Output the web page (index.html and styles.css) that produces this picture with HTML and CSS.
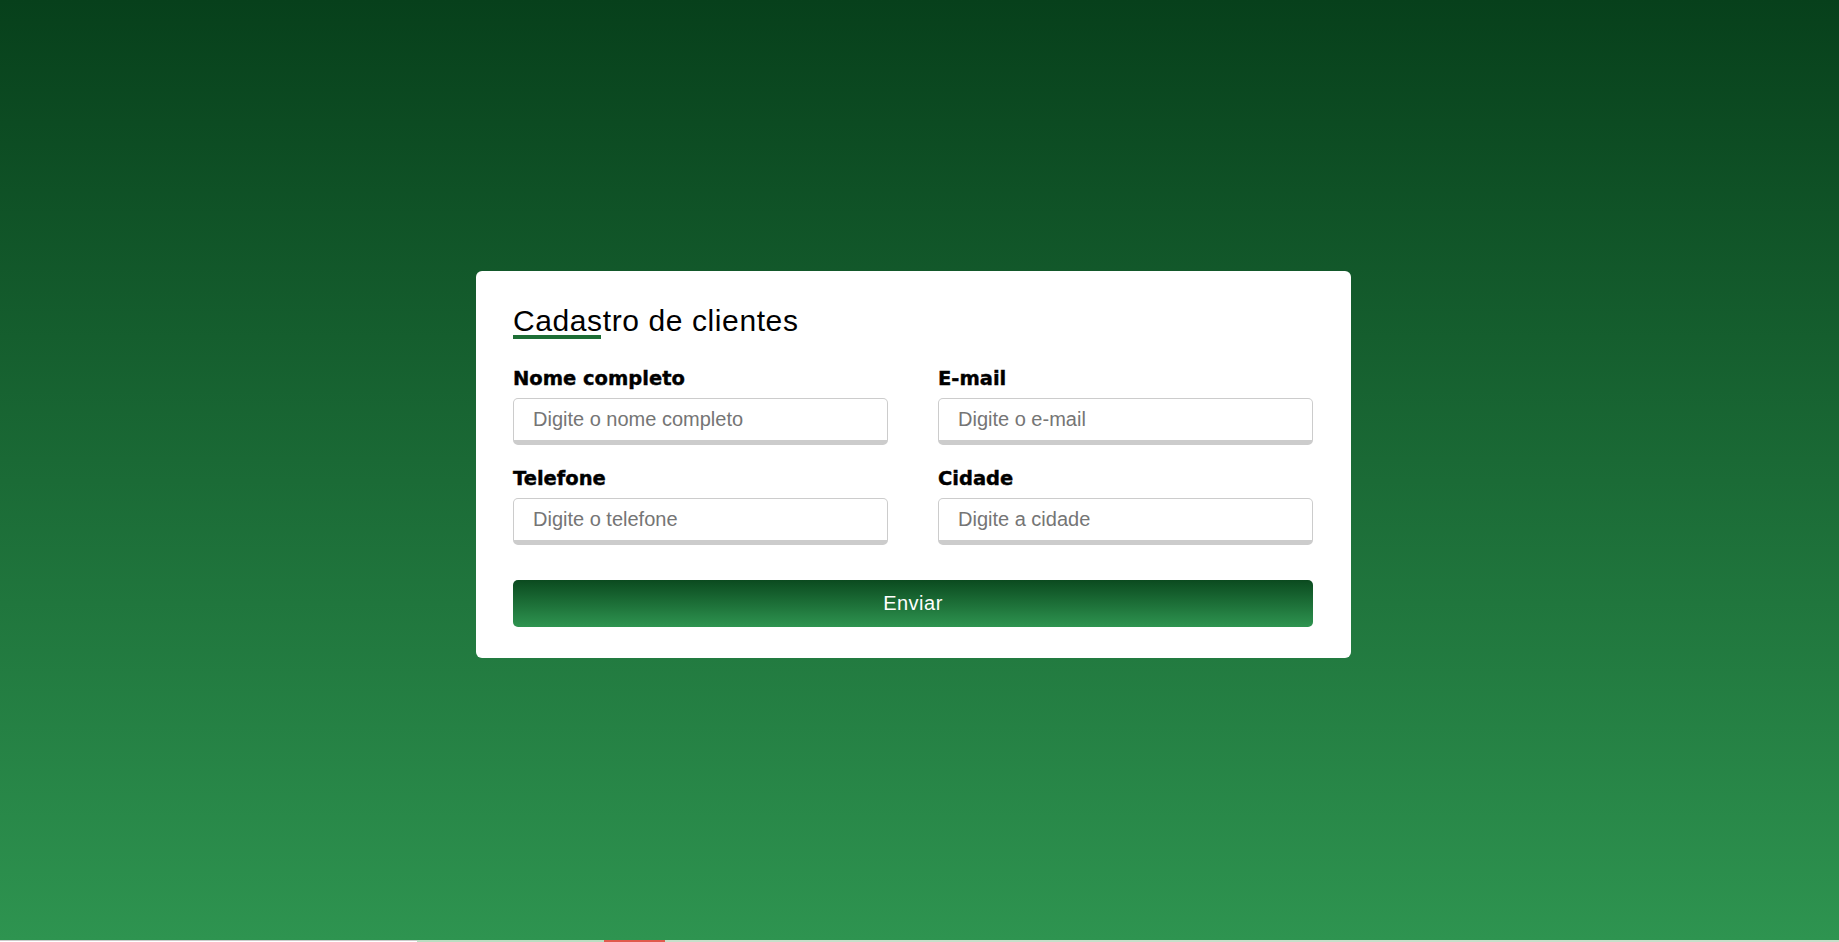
FILE: index.html
```html
<!DOCTYPE html>
<html lang="pt-BR">
<head>
<meta charset="utf-8">
<title>Cadastro de clientes</title>
<link rel="stylesheet" href="styles.css">
</head>
<body>
<main class="page">
  <section class="card">
    <h1 class="title">Cadastro de clientes</h1>
    <form class="form">
      <div class="grid">
        <div class="field">
          <label class="label" for="nome">Nome completo</label>
          <input class="input" id="nome" type="text" placeholder="Digite o nome completo">
        </div>
        <div class="field">
          <label class="label" for="email">E-mail</label>
          <input class="input" id="email" type="email" placeholder="Digite o e-mail">
        </div>
        <div class="field">
          <label class="label" for="tel">Telefone</label>
          <input class="input" id="tel" type="text" placeholder="Digite o telefone">
        </div>
        <div class="field">
          <label class="label" for="cidade">Cidade</label>
          <input class="input" id="cidade" type="text" placeholder="Digite a cidade">
        </div>
      </div>
      <button class="button" type="button">Enviar</button>
    </form>
  </section>
</main>
<div class="strip">
  <span class="seg seg-a"></span>
  <span class="seg seg-b"></span>
  <span class="seg seg-c"></span>
  <span class="seg seg-d"></span>
</div>
</body>
</html>
```
FILE: styles.css
```css
* { box-sizing: border-box; }

html, body {
  margin: 0;
  padding: 0;
  overflow: hidden;
}

body {
  font-family: "Liberation Sans", Arial, sans-serif;
  color: #000;
}

.page {
  height: 940px;
  background: linear-gradient(180deg, #07401b 0%, #2e9450 100%);
  display: flex;
  align-items: center;
  justify-content: center;
  padding: 0 12px 11px 0;
}

.card {
  width: 875px;
  background: #fff;
  border-radius: 6px;
  padding: 35px 38px 31px 37px;
}

.title {
  margin: 0;
  font-weight: 400;
  font-size: 30px;
  letter-spacing: 0.6px;
  line-height: 29px;
  color: #000;
}

.title::after {
  content: "";
  display: block;
  width: 88px;
  height: 4px;
  background: #1d6e35;
}

.form {
  margin-top: 29px;
  display: flex;
  flex-direction: column;
}

.grid {
  display: grid;
  grid-template-columns: 1fr 1fr;
  column-gap: 50px;
  row-gap: 23px;
}

.field {
  display: flex;
  flex-direction: column;
  gap: 8px;
}

.label {
  font-family: "DejaVu Sans", "Liberation Sans", sans-serif;
  font-weight: 700;
  font-size: 19.5px;
  line-height: 22px;
  color: #000;
  -webkit-text-stroke: 0.4px #000;
}

.input {
  height: 47px;
  width: 100%;
  border: 1px solid #cccccc;
  border-bottom: 5px solid #cccccc;
  border-radius: 5px;
  padding: 0 12px 0 19px;
  font-family: "Liberation Sans", Arial, sans-serif;
  font-size: 20px;
  color: #222;
  background: #fff;
  outline: none;
}

.input::placeholder {
  color: #757575;
}

.button {
  margin-top: 35px;
  height: 47px;
  width: 100%;
  border: none;
  border-radius: 5px;
  background: linear-gradient(180deg, #0b4a1f 0%, #2e9450 100%);
  color: #fff;
  font-family: "Liberation Sans", Arial, sans-serif;
  font-size: 20px;
  letter-spacing: 0.5px;
  cursor: pointer;
}

.strip {
  display: flex;
  height: 2px;
}

.seg { display: block; height: 2px; }
.seg-a { width: 417px; background: #fff; border-top: 1px solid #cccccc; }
.seg-b { width: 187px; background: #b9dec1; }
.seg-c { width: 61px; background: #e05a4c; }
.seg-d { flex: 1; background: #c6e0ca; }
```
